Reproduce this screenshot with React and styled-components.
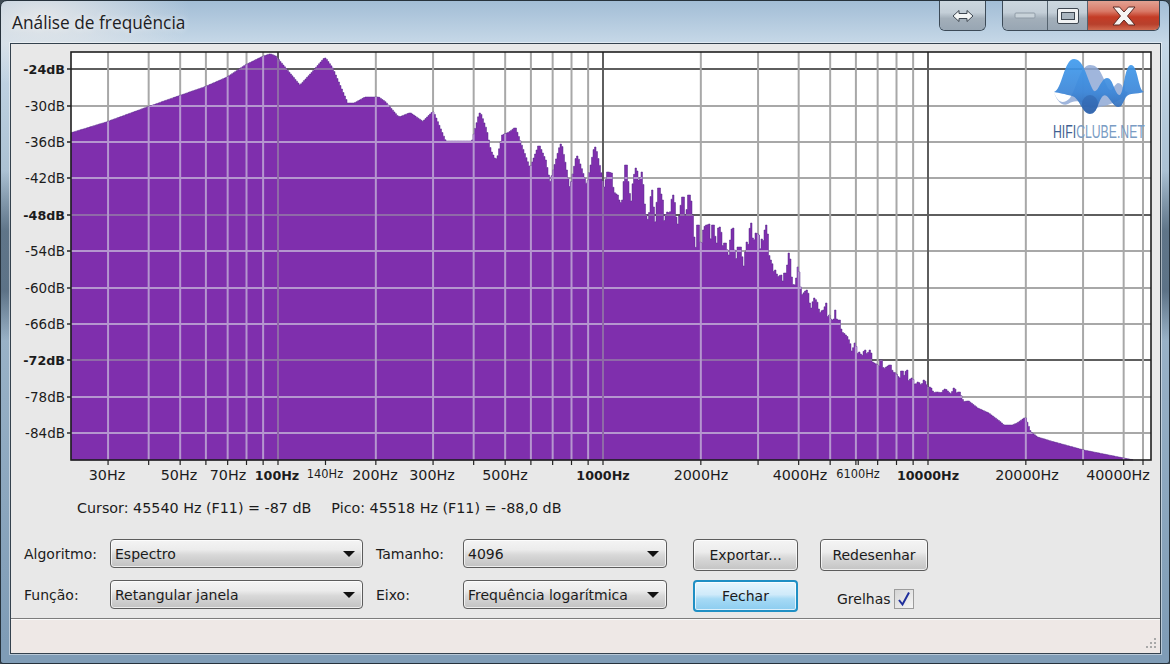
import React from "react";
import styled, { createGlobalStyle } from "styled-components";

const Global = createGlobalStyle`
  html, body { margin: 0; padding: 0; background: #3e4a54; }
  #root { width: 1170px; height: 664px; overflow: hidden; }
`;

const UI_FONT = `"DejaVu Sans", "Noto Sans", sans-serif`;

const Frame = styled.div`
  width: 1170px;
  height: 664px;
  box-sizing: border-box;
  display: flex;
  flex-direction: column;
  border: 1px solid #26323c;
  border-radius: 7px 7px 3px 3px;
  overflow: hidden;
  background:
    radial-gradient(ellipse 150px 70px at 40px 15px, rgba(235,235,235,.85), rgba(235,235,235,0) 100%),
    linear-gradient(180deg, rgba(0,0,0,0) 170px, rgba(40,60,80,.55) 230px, rgba(40,60,80,.55) 290px, rgba(0,0,0,0) 340px),
    linear-gradient(180deg, #a2bdd6 0, #c6d8e7 42px, #a5bccf 200px, #7f9cb6 640px);
`;

const TitleBar = styled.header`
  height: 43px;
  flex: none;
  display: flex;
  align-items: flex-start;
  justify-content: space-between;
  padding-right: 9px;
`;

const Title = styled.h1`
  margin: 12px 0 0 11px;
  font: 400 17.3px/20px "Open Sans", "Noto Sans", sans-serif;
  color: #1d2022;
  text-shadow: 0 0 6px rgba(255,255,255,.8);
`;

const CaptionGroup = styled.div`
  display: flex;
  gap: 16px;
`;

const Caption = styled.div`
  display: flex;
  height: 30px;
  box-sizing: border-box;
  border: 1px solid #3c4a57;
  border-top: 0;
  border-radius: 0 0 6px 6px;
  overflow: hidden;
`;

const CaptionBtn = styled.div`
  width: ${(p) => p.$w}px;
  display: flex;
  align-items: center;
  justify-content: center;
  box-sizing: border-box;
  background: ${(p) =>
    p.$red
      ? "linear-gradient(180deg,#e2a192 0,#d97a68 35%,#c43c26 55%,#b8402c 80%,#d06a50 100%)"
      : "linear-gradient(180deg,#ccd7df 0,#c3ced7 40%,#a3afba 60%,#98a6b3 100%)"};
  & + & { border-left: 1px solid #55636f; }
`;

const Body = styled.main`
  flex: 1;
  display: flex;
  flex-direction: column;
  margin: 0 9px 10px 10px;
  background: #e8e8e8;
  outline: 1px solid #34424e;
  box-shadow: 0 0 0 2px rgba(255,255,255,.45);
  min-height: 0;
`;

const ChartSvg = styled.svg`
  display: block;
  flex: none;
  width: 1149px;
  height: 446px;
`;

const Readout = styled.div`
  flex: none;
  height: 36px;
  display: flex;
  align-items: center;
  gap: 20px;
  padding-left: 66px;
  font: 400 14.3px/18px ${UI_FONT};
  color: #1b1b1b;
`;

const Controls = styled.div`
  flex: none;
  margin-top: 13px;
  padding-left: 13px;
  display: grid;
  grid-template-columns: 86px 253px 100px 204px 131px 130px;
  grid-template-rows: 32px 32px;
  row-gap: 9px;
  align-items: start;
`;

const Label = styled.label`
  font: 400 14px/31px ${UI_FONT};
  color: #1b1b1b;
  margin-left: ${(p) => p.$indent || 0}px;
`;

const SelectBox = styled.div`
  height: 29px;
  box-sizing: border-box;
  display: flex;
  align-items: center;
  justify-content: space-between;
  padding: 0 7px 0 4px;
  border: 1px solid #5c5c5c;
  border-radius: 4px;
  box-shadow: inset 0 0 0 1px rgba(255,255,255,.7);
  background: linear-gradient(180deg,#f4f4f4 0,#ececec 35%,#d8d8d8 55%,#c2c2c2 100%);
  font: 400 14px/18px ${UI_FONT};
  color: #1b1b1b;
`;

const Arrow = styled.span`
  width: 0;
  height: 0;
  border-left: 6px solid transparent;
  border-right: 6px solid transparent;
  border-top: 6px solid #111;
`;

const PushButton = styled.button`
  height: 32px;
  box-sizing: border-box;
  padding: 0;
  margin-left: ${(p) => p.$left || 0}px;
  width: ${(p) => p.$w}px;
  border: ${(p) => (p.$primary ? "2px solid #1f8fc4" : "1px solid #5c5c5c")};
  border-radius: 4px;
  box-shadow: inset 0 0 0 1px rgba(255,255,255,.7);
  background: ${(p) =>
    p.$primary
      ? "linear-gradient(180deg,#e6f6fd 0,#cfeafa 45%,#a6daf5 60%,#8ccdf0 100%)"
      : "linear-gradient(180deg,#f4f4f4 0,#ececec 40%,#d8d8d8 60%,#c4c4c4 100%)"};
  font: 400 14px/18px ${UI_FONT};
  color: #1b1b1b;
`;

const GridToggle = styled.div`
  display: flex;
  align-items: center;
  gap: 3px;
  height: 20px;
  margin: 9px 0 0 39px;
  font: 400 14px/20px ${UI_FONT};
  color: #1b1b1b;
  white-space: nowrap;
`;

const CheckBox = styled.span`
  width: 20px;
  height: 20px;
  flex: none;
  box-sizing: border-box;
  display: flex;
  align-items: center;
  justify-content: center;
  border: 1px solid #9c9c9c;
  background: linear-gradient(135deg,#d5d5d5,#f6f6f6);
`;

const StatusBar = styled.footer`
  flex: 1;
  margin-top: 6px;
  display: flex;
  justify-content: flex-end;
  align-items: flex-end;
  padding: 0 3px 3px 0;
  border-top: 1px solid #7c7c7c;
  box-shadow: inset 0 1px 0 #fafafa;
  background: #eee8e6;
`;

const L = 71, R = 1151, T = 52, B = 460;
const px = (f) => 603 + 325 * Math.log10(f / 1000);

const hLines = [
  [69, true], [106], [142], [178], [215, true], [251], [288], [324], [360, true], [397], [433],
];
const yLabels = ["-24dB","-30dB","-36dB","-42dB","-48dB","-54dB","-60dB","-66dB","-72dB","-78dB","-84dB"];

const gridFreq = [30,40,50,60,70,80,90,100,200,300,400,500,600,700,800,900,1000,2000,3000,4000,5000,6000,7000,8000,9000,10000,20000,30000,40000];
const vLines = [
  ...gridFreq.map((f) => [px(f), f === 100 || f === 1000 || f === 10000]),
  [1143, false],
];
const ticks = [...vLines.map((v) => v[0]), px(140), px(6100)];

const xLabels = [
  ["30Hz", 107], ["50Hz", 179], ["70Hz", 228], ["100Hz", 277, "b"], ["140Hz", 325, "s"],
  ["200Hz", 375], ["300Hz", 432], ["500Hz", 505], ["1000Hz", 603, "b"], ["2000Hz", 701],
  ["4000Hz", 800], ["6100Hz", 858, "s"], ["10000Hz", 928, "b"], ["20000Hz", 1027], ["40000Hz", 1118],
];

const trace = `71,133 107,122 148,107 179,96 205,87 228,77 246,65 262,57 270,54 275,56 300,86 312,73 325,58 332,68
347,103 355,103 366,97 378,97 385,102 397,116 400,117 410,113 423,122 433,112 445,141 472,141 473,140 480,113 486,130 490,150
495,160 498,158 503,135 510,132 515,128 522,148 530,170 539,146 545,160 550,185 561,144 566,170 570,192 577,156 583,175 587,188
595,147 600,170 604,192 608,172 611,173 613,192 617,195 620,205 623,200 624,187 626,165 628,187 630,200 631,215 633,187 636,168
638,180 640,183 642,172 643,197 646,218 649,222 651,203 652,190 653,207 654,220 656,227 657,207 659,188 662,200 663,220 665,222
667,212 669,213 670,220 673,195 675,210 676,224 679,224 681,208 683,197 684,213 686,223 688,205 689,195 691,203 693,227 694,247
697,248 698,225 700,248 702,247 704,230 706,225 707,227 709,224 710,250 712,235 713,225 715,240 717,248 719,228 720,227 722,248
725,243 727,252 729,260 732,230 733,228 734,250 736,270 738,247 740,247 742,260 744,272 747,242 748,255 751,223 753,253 756,233
758,235 759,268 762,239 764,245 766,225 768,243 769,268 771,260 773,275 775,270 777,278 781,275 783,287 785,273 787,277
789,253 791,277 793,287 795,287 797,278 798,267 800,287 802,297 805,292 807,290 809,303 812,313 814,298 817,303 819,315 823,310
824,318 826,303 828,330 829,315 831,323 833,320 834,328 835,310 837,328 839,320 841,332 843,333 847,337 850,345 852,357 855,343
857,357 859,352 862,358 865,350 867,357 870,350 872,362 877,365 879,368 881,360 883,370 887,367 890,365 892,372 895,373 900,380
902,371 904,378 907,370 908,382 912,378 915,387 918,382 922,387 924,380 927,387 930,387 933,393 937,392 942,393 945,389 948,392
952,395 954,388 957,395 959,392 961,397 963,402 968,401 977,408 988,413 1000,422 1003,425 1013,425 1018,423 1025,418 1030,432
1037,437 1050,441 1083,450 1123,458 1133,460`
  .trim()
  .split(/\s+/)
  .map((p) => p.split(",").map(Number));

// The spectrum is drawn as narrow bars: each 1.5px column takes the highest value it spans.
const yAt = (x) => {
  for (let i = 1; i < trace.length; i++) {
    if (x <= trace[i][0]) {
      const [x0, y0] = trace[i - 1];
      const [x1, y1] = trace[i];
      return x1 === x0 ? y1 : y0 + ((y1 - y0) * (x - x0)) / (x1 - x0);
    }
  }
  return B;
};

const buildSpectrum = () => {
  const pts = [];
  const step = 1.5;
  for (let x = L; x < 1133; x += step) {
    let y = Math.min(yAt(x), yAt(x + step));
    trace.forEach(([vx, vy]) => {
      if (vx >= x && vx <= x + step) y = Math.min(y, vy);
    });
    pts.push(`${x},${y}`, `${x + step},${y}`);
  }
  pts.push(`1133,${B}`, `${L},${B}`);
  return pts.join(" ");
};

const spectrum = buildSpectrum();

const LogoText = styled.text`
  font-family: "Liberation Sans", sans-serif;
  font-size: 17.5px;
  fill: #7a9cc4;
`;

const LogoStrong = styled.tspan`
  fill: #3f5f92;
`;

const Logo = () => (
  <g>
    <defs>
      <linearGradient id="logoBlue" x1="0" y1="0" x2="0" y2="1">
        <stop offset="0" stopColor="#3f9bee" />
        <stop offset="0.6" stopColor="#3b86d8" />
        <stop offset="1" stopColor="#2d63ae" />
      </linearGradient>
    </defs>
    <path
      d="M1054,92 C1058,104 1064,104 1070,98 C1076,90 1080,65 1090,65 C1100,65 1102,76 1108,88 C1112,94 1114,84 1118,83 C1124,83 1122,92 1128,92 L1126,96 C1112,105 1100,108 1090,108 C1080,100 1075,100 1068,104 C1062,107 1056,100 1054,92 Z"
      fill="#8fa9d6"
      opacity="0.85"
    />
    <path
      d="M1054,92 C1062,90 1064,59 1074,59 C1083,59 1086,75 1092,88 C1097,99 1100,78 1107,78 C1113,78 1114,92 1119,95 C1124,97 1124,65 1131,65 C1138,65 1138,90 1144,92 C1136,95 1130,92 1126,97 C1122,104 1122,107 1118,107 C1112,107 1108,92 1103,96 C1098,100 1098,114 1090,114 C1082,114 1080,98 1072,96 C1064,94 1060,93 1054,92 Z"
      fill="url(#logoBlue)"
      opacity="0.92"
    />
    <ellipse cx="1090" cy="104" rx="8" ry="9" fill="#2d5fa8" opacity="0.5" />
    <LogoText transform="translate(1053 138) scale(0.7 1)">
      <LogoStrong>HIFI</LogoStrong>CLUBE.NET
    </LogoText>
  </g>
);

const SvgLabel = styled.text`
  font-family: "DejaVu Sans", sans-serif;
  font-size: ${(p) => (p.$small ? 11.4 : p.$bold ? 12.7 : p.$size || 14.3)}px;
  font-weight: ${(p) => (p.$bold ? 700 : 400)};
  fill: #1c1c1c;
`;

const Chart = () => (
  <ChartSvg viewBox="11 44 1149 446">
    <defs>
      <clipPath id="spec"><polygon points={spectrum} /></clipPath>
    </defs>
    <rect x={L} y={T} width={R - L} height={B - T} fill="#fff" />
    {hLines.map(([y, dark]) => (
      <line key={y} x1={L} x2={R} y1={y} y2={y} stroke={dark ? "#5e5e5e" : "#a8a8a8"} strokeWidth="2" />
    ))}
    {vLines.map(([x, dark]) => (
      <line key={x} x1={x} x2={x} y1={T} y2={B} stroke={dark ? "#5e5e5e" : "#a8a8a8"} strokeWidth="2" />
    ))}
    <polygon points={spectrum} fill="#7f2fad" stroke="#57298a" strokeWidth="0.5" />
    <g clipPath="url(#spec)">
      {hLines.map(([y, dark]) => (
        <line key={y} x1={L} x2={R} y1={y} y2={y} stroke={dark ? "#8f6aa8" : "#b596cf"} strokeWidth="2" />
      ))}
      {vLines.map(([x, dark]) => (
        <line key={x} x1={x} x2={x} y1={T} y2={B} stroke={dark ? "#8f6aa8" : "#b596cf"} strokeWidth="2" />
      ))}
    </g>
    <Logo />
    <rect x={L} y={T} width={R - L} height={B - T} fill="none" stroke="#1e1e1e" strokeWidth="1.6" />
    {hLines.map(([y]) => (
      <line key={y} x1={L - 4} x2={L} y1={y} y2={y} stroke="#222" strokeWidth="1.4" />
    ))}
    {ticks.map((x) => (
      <line key={x} x1={x} x2={x} y1={B} y2={B + 5} stroke="#222" strokeWidth="1.2" />
    ))}
    {yLabels.map((t, i) => (
      <SvgLabel key={t} x={65} y={hLines[i][0] + 5} textAnchor="end" $bold={hLines[i][1]} $size={13.5}>{t}</SvgLabel>
    ))}
    {xLabels.map(([t, x, k]) => (
      <SvgLabel key={t} x={x} y={k === "s" ? 478 : 480} textAnchor="middle" $bold={k === "b"} $small={k === "s"}>{t}</SvgLabel>
    ))}
  </ChartSvg>
);

const GLYPH = { fill: "#f4f6f6", stroke: "#3d4650", strokeWidth: 1, strokeLinejoin: "round" };

const App = () => (
  <>
    <Global />
    <Frame>
      <TitleBar>
        <Title>Análise de frequência</Title>
        <CaptionGroup>
          <Caption>
            <CaptionBtn $w={45}>
              <svg width="22" height="14" viewBox="0 0 22 14">
                <path d="M1,7 L7,1.5 V4.5 H15 V1.5 L21,7 L15,12.5 V9.5 H7 V12.5 Z" {...GLYPH} />
              </svg>
            </CaptionBtn>
          </Caption>
          <Caption>
            <CaptionBtn $w={44}>
              <svg width="22" height="8" viewBox="0 0 22 8">
                <rect x="1" y="1" width="20" height="5" rx="1" fill="#c8d2d9" stroke="#8f9ba6" />
              </svg>
            </CaptionBtn>
            <CaptionBtn $w={40}>
              <svg width="24" height="18" viewBox="0 0 24 18">
                <rect x="1.5" y="1.5" width="21" height="15" rx="1.5" fill="#f0f2f3" stroke="#3d4650" />
                <rect x="5.5" y="5.5" width="13" height="7" fill="#a9b5bf" stroke="#3d4650" />
              </svg>
            </CaptionBtn>
            <CaptionBtn $w={72} $red>
              <svg width="28" height="20" viewBox="0 0 28 20">
                <path d="M3,1 H9.5 L14,6 L18.5,1 H25 L17.5,10 L25,19 H18.5 L14,14 L9.5,19 H3 L10.5,10 Z" fill="#f6f4f2" stroke="#5a2a24" strokeWidth="1" strokeLinejoin="round" />
              </svg>
            </CaptionBtn>
          </Caption>
        </CaptionGroup>
      </TitleBar>
      <Body>
        <Chart />
        <Readout>
          <span>Cursor: 45540 Hz (F11) = -87 dB</span>
          <span>Pico: 45518 Hz (F11) = -88,0 dB</span>
        </Readout>
        <Controls>
          <Label>Algoritmo:</Label>
          <SelectBox>Espectro<Arrow /></SelectBox>
          <Label $indent={13}>Tamanho:</Label>
          <SelectBox>4096<Arrow /></SelectBox>
          <PushButton $left={26} $w={105}>Exportar...</PushButton>
          <PushButton $left={22} $w={108}>Redesenhar</PushButton>
          <Label>Função:</Label>
          <SelectBox>Retangular janela<Arrow /></SelectBox>
          <Label $indent={13}>Eixo:</Label>
          <SelectBox>Frequência logarítmica<Arrow /></SelectBox>
          <PushButton $left={26} $w={105} $primary>Fechar</PushButton>
          <GridToggle>
            Grelhas
            <CheckBox>
              <svg width="16" height="16" viewBox="0 0 16 16">
                <path d="M3,9 L6.5,13.5 L13,1.5" fill="none" stroke="#1f2f9c" strokeWidth="2" />
              </svg>
            </CheckBox>
          </GridToggle>
        </Controls>
        <StatusBar>
          <svg width="13" height="13" viewBox="0 0 13 13">
            {[[10,1],[6,5],[10,5],[2,9],[6,9],[10,9]].map(([x,y]) => (
              <rect key={`${x}-${y}`} x={x} y={y} width="2" height="2" fill="#a8a8a8" />
            ))}
          </svg>
        </StatusBar>
      </Body>
    </Frame>
  </>
);

export default App;
